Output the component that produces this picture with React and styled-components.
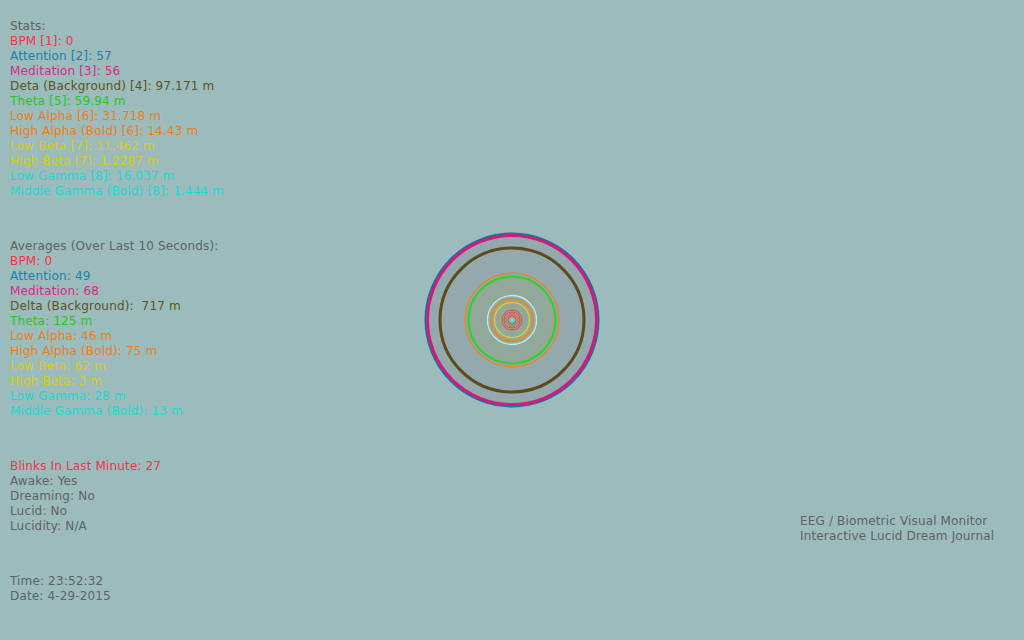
import React from 'react';
import styled, { createGlobalStyle } from 'styled-components';

const GlobalStyle = createGlobalStyle`
  html, body {
    margin: 0;
    padding: 0;
    background: #9bbcbb;
  }
`;

const colors = {
  label: '#5d6364',
  bpm: '#f5304e',
  attention: '#1a7fab',
  meditation: '#d42a8c',
  delta: '#5c5226',
  theta: '#28c428',
  alpha: '#f07c22',
  beta: '#d6cc16',
  gamma: '#22d8d2',
};

const Screen = styled.div`
  width: 1024px;
  height: 640px;
  display: grid;
  grid-template-columns: 1fr auto 1fr;
  font-family: 'DejaVu Sans', Verdana, sans-serif;
  font-size: 12px;
  letter-spacing: 0.15px;
  line-height: 15px;
  overflow: hidden;
`;

const Readout = styled.div`
  padding: 19px 0 0 10px;
  display: flex;
  flex-direction: column;
  gap: 40px;
`;

const Group = styled.div`
  display: flex;
  flex-direction: column;
`;

const Line = styled.div`
  color: ${(props) => props.color || colors.label};
  white-space: pre;
`;

const Stage = styled.div`
  display: flex;
  align-items: center;
  justify-content: center;
`;

const Credits = styled.div`
  align-self: end;
  padding: 0 0 96px 198px;
  color: ${colors.label};
`;

const stats = [
  ['Stats:'],
  ['BPM [1]: 0', colors.bpm],
  ['Attention [2]: 57', colors.attention],
  ['Meditation [3]: 56', colors.meditation],
  ['Deta (Background) [4]: 97.171 m', colors.delta],
  ['Theta [5]: 59.94 m', colors.theta],
  ['Low Alpha [6]: 31.718 m', colors.alpha],
  ['High Alpha (Bold) [6]: 14.43 m', colors.alpha],
  ['Low Beta [7]: 11.462 m', colors.beta],
  ['High Beta [7]: 1.2287 m', colors.beta],
  ['Low Gamma [8]: 16.037 m', colors.gamma],
  ['Middle Gamma (Bold) [8]: 1.444 m', colors.gamma],
];

const averages = [
  ['Averages (Over Last 10 Seconds):'],
  ['BPM: 0', colors.bpm],
  ['Attention: 49', colors.attention],
  ['Meditation: 68', colors.meditation],
  ['Delta (Background):  717 m', colors.delta],
  ['Theta: 125 m', colors.theta],
  ['Low Alpha: 46 m', colors.alpha],
  ['High Alpha (Bold): 75 m', colors.alpha],
  ['Low Beta: 62 m', colors.beta],
  ['High Beta: 3 m', colors.beta],
  ['Low Gamma: 28 m', colors.gamma],
  ['Middle Gamma (Bold): 13 m', colors.gamma],
];

const state = [
  ['Blinks In Last Minute: 27', colors.bpm],
  ['Awake: Yes'],
  ['Dreaming: No'],
  ['Lucid: No'],
  ['Lucidity: N/A'],
];

const clock = [['Time: 23:52:32'], ['Date: 4-29-2015']];

const rings = [
  { r: 86.5, stroke: '#1670a6', w: 2 },
  { r: 84.5, stroke: '#d41a7a', w: 3 },
  { r: 72, stroke: '#5e4b1c', w: 3 },
  { r: 46.8, stroke: '#f08020', w: 1.3 },
  { r: 43.5, stroke: '#34d02c', w: 2.2 },
  { r: 24.5, stroke: '#b4f0ee', w: 1.3 },
  { r: 21, stroke: '#f08428', w: 1.6 },
  { r: 17.5, stroke: '#e2d424', w: 1.2 },
  { r: 10, stroke: '#ee4a3c', w: 1 },
  { r: 8, stroke: '#ee4a3c', w: 1 },
  { r: 6, stroke: '#ee4a3c', w: 1 },
  { r: 4, stroke: '#ee4a3c', w: 1 },
];

const Brainwaves = () => (
  <svg width="180" height="180" viewBox="-90 -90 180 180">
    <circle r="86" fill="#93a9ae" />
    <circle r="44" fill="#93a89b" />
    {rings.map((ring, i) => (
      <circle key={i} r={ring.r} fill="none" stroke={ring.stroke} strokeWidth={ring.w} />
    ))}
    <circle r="2.4" fill="#38e4dc" />
  </svg>
);

const Block = ({ lines }) => (
  <Group>
    {lines.map(([text, color]) => (
      <Line key={text} color={color}>
        {text}
      </Line>
    ))}
  </Group>
);

export default function App() {
  return (
    <>
      <GlobalStyle />
      <Screen>
        <Readout>
          <Block lines={stats} />
          <Block lines={averages} />
          <Block lines={state} />
          <Block lines={clock} />
        </Readout>
        <Stage>
          <Brainwaves />
        </Stage>
        <Credits>
          <Line>EEG / Biometric Visual Monitor</Line>
          <Line>Interactive Lucid Dream Journal</Line>
        </Credits>
      </Screen>
    </>
  );
}
